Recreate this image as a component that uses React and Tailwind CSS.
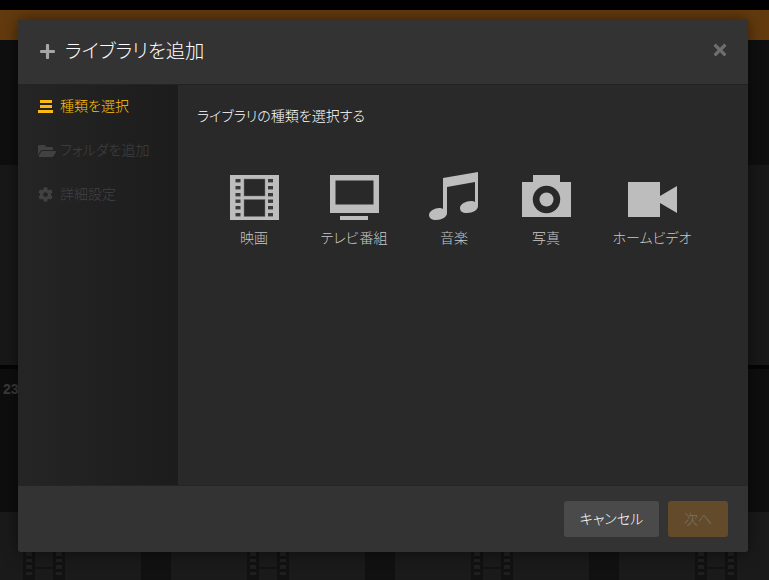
import { FaCog, FaFolderOpen, FaPlus, FaTimes } from "react-icons/fa";

const FONT = "font-['Liberation_Sans','Noto_Sans_CJK_JP',sans-serif]";

function FilmIcon() {
  const rows = [4, 11, 18, 24.5, 31, 38];
  return (
    <svg width="50" height="45" viewBox="-1 0 50 45">
      <rect width="49" height="45" fill="#bdbdbd" />
      {rows.map((y) => (
        <g key={y} fill="#3a3a3a">
          <rect x="5.5" y={y} width="5" height="3.4" />
          <rect x="38" y={y} width="5" height="3.4" />
        </g>
      ))}
      <rect x="14" y="4" width="21" height="17" fill="#292929" stroke="#777" strokeWidth="0.5" />
      <rect x="14" y="24.5" width="21" height="17" fill="#292929" stroke="#777" strokeWidth="0.5" />
    </svg>
  );
}

function TvIcon() {
  return (
    <svg width="50" height="45" viewBox="-1 0 50 45">
      <path fillRule="evenodd" fill="#bdbdbd" d="M0 0H49V38H0ZM5.5 5.5V29.500H43.500V5.500Z" />
      <rect x="10" y="41" width="28" height="4" fill="#bdbdbd" />
    </svg>
  );
}

function MusicIcon() {
  return (
    <svg width="51" height="48" viewBox="0 0 51 48">
      <path
        fill="#bdbdbd"
        d="M14 6L49 0V34C49 38 44 41 38 41C33 41 31 39 31 36C31 32 37 29 42 29C43.500 29 45 29.300 46 30V10L18 15V41C18 45 13 48 7 48C3 48 0 46 0 43C0 39 6 36 10 36C11.500 36 13 36.300 14 37Z"
      />
    </svg>
  );
}

function CameraIcon() {
  return (
    <svg width="50" height="45" viewBox="-1 0 50 45">
      <path fill="#bdbdbd" d="M11 0H38V7H49V42H0V7H11Z" />
      <circle cx="24.500" cy="24.500" r="13.700" fill="#292929" />
      <circle cx="24.500" cy="24.500" r="7" fill="#bdbdbd" />
    </svg>
  );
}

function VideoIcon() {
  return (
    <svg width="50" height="38" viewBox="-1 0 50 38">
      <path fill="#bdbdbd" d="M0 0H32V35H0ZM32 14L49 4V31L32 21Z" />
    </svg>
  );
}

function ListIcon() {
  return (
    <span className="flex w-[15px] shrink-0 flex-col items-center gap-[2px]">
      <span className="h-[3px] w-[12px] bg-[#fdb913]" />
      <span className="h-[3px] w-[12px] bg-[#fdb913]" />
      <span className="h-[3px] w-[15px] bg-[#fdb913]" />
    </span>
  );
}

function FilmColumn() {
  const rows = [0, 1, 2, 3, 4, 5, 6, 7, 8, 9];
  return (
    <div className="flex h-full w-[12px] flex-col items-center gap-[3px] bg-[#121212] pt-[1px]">
      {rows.map((row) => (
        <span key={row} className="h-[3.500px] w-[6px] shrink-0 bg-[#1f1f1f]" />
      ))}
    </div>
  );
}

function FilmStrip() {
  return (
    <div className="flex h-full w-[42px]">
      <FilmColumn />
      <div className="flex-1 pt-[55px]">
        <div className="h-[2px] bg-[#121212]" />
      </div>
      <FilmColumn />
    </div>
  );
}

const types = [
  { label: "映画", icon: <FilmIcon />, width: "w-[50px]" },
  { label: "テレビ 番組", icon: <TvIcon />, width: "w-[68px]" },
  { label: "音楽", icon: <MusicIcon />, width: "w-[50px]" },
  { label: "写真", icon: <CameraIcon />, width: "w-[50px]", offset: "ml-[1px]" },
  { label: "ホームビデオ", icon: <VideoIcon />, width: "w-[80px]" },
];

export default function App() {
  return (
    <div className={`relative h-[580px] w-[769px] overflow-hidden bg-black [font-feature-settings:'palt'] ${FONT}`}>
      <div className="flex h-full flex-col">
        <div className="h-[10px] bg-black" />
        <div className="h-[30px] bg-[#633a0e]" />
        <div className="h-[125px] bg-[#0f0f0f]" />
        <div className="h-[200px] bg-[#181818]" />
        <div className="h-[4px] bg-[#050505]" />
        <div className="h-[143px] bg-[#0e0e0e] pl-[3px] pt-[10px] text-[14px] font-bold text-[#3a3a3a]">23</div>
        <div className="flex h-[68px] bg-[#1a1a1a] pl-[23px]">
          {[0, 1, 2, 3].map((col) => (
            <div key={col} className="flex h-full w-[224px] shrink-0">
              <FilmStrip />
              <div className="ml-[76px] h-full w-[30px] bg-[#111111]" />
            </div>
          ))}
        </div>
      </div>

      <div className="absolute left-[18px] top-[20px] flex h-[532px] w-[730px] flex-col overflow-hidden rounded-[3px] bg-[#292929] shadow-[0_0_15px_rgba(0,0,0,0.5)]">
        <header className="flex h-[65px] shrink-0 items-center justify-between border-b border-[#232323] bg-[#333333] pl-[21px] pr-[19px]">
          <div className="flex items-center gap-[9px]">
            <FaPlus className="mb-[1px] text-[17px] text-[#a5a5a5]" />
            <h1 className="text-[19.3px] font-light text-white">ライブラリを追加</h1>
          </div>
          <FaTimes className="mb-[4px] text-[18px] text-[#6e6e6e]" />
        </header>

        <div className="flex min-h-0 flex-1">
          <nav className="flex w-[160px] shrink-0 flex-col gap-[25px] bg-gradient-to-r from-[#252525] to-[#1c1c1c] pl-[20px] pt-[12px] text-[14px] font-light">
            <div className="flex h-[19px] items-center gap-[7px] text-[#ffc107]">
              <ListIcon />
              <span>種類を選択</span>
            </div>
            <div className="flex h-[19px] items-center gap-[4px] text-[#414141]">
              <FaFolderOpen className="shrink-0 text-[18px] text-[#414141]" />
              <span>フォルダを追加</span>
            </div>
            <div className="flex h-[19px] items-center gap-[7px] text-[#414141]">
              <FaCog className="shrink-0 text-[15px] text-[#414141]" />
              <span>詳細設定</span>
            </div>
          </nav>

          <main className="flex-1 pl-[19px] pt-[22px]">
            <p className="text-[14px] font-light leading-[19px] text-white">ライブラリの種類を選択する</p>
            <div className="ml-[32px] mt-[46px] flex items-start gap-[41px]">
              {types.map((type) => (
                <div key={type.label} className={`flex flex-col items-center ${type.width} ${type.offset || ""}`}>
                  <div className="flex h-[48px] items-end justify-center">{type.icon}</div>
                  <span className="mt-[9px] whitespace-nowrap text-[14px] font-light leading-[19px] text-[#c8c8c8] [word-spacing:-3px]">{type.label}</span>
                </div>
              ))}
            </div>
          </main>
        </div>

        <footer className="flex h-[67px] shrink-0 items-start justify-end gap-[9px] border-t border-[#252525] bg-[#333333] pr-[20px] pt-[15px]">
          <button className="h-[36px] w-[95px] rounded-[3px] bg-[#4a4a4a] text-[14px] font-light text-white">キャンセル</button>
          <button className="h-[36px] w-[60px] rounded-[3px] bg-[#624a2a] text-[14px] font-light text-[#7c7367]">次へ</button>
        </footer>
      </div>
    </div>
  );
}
